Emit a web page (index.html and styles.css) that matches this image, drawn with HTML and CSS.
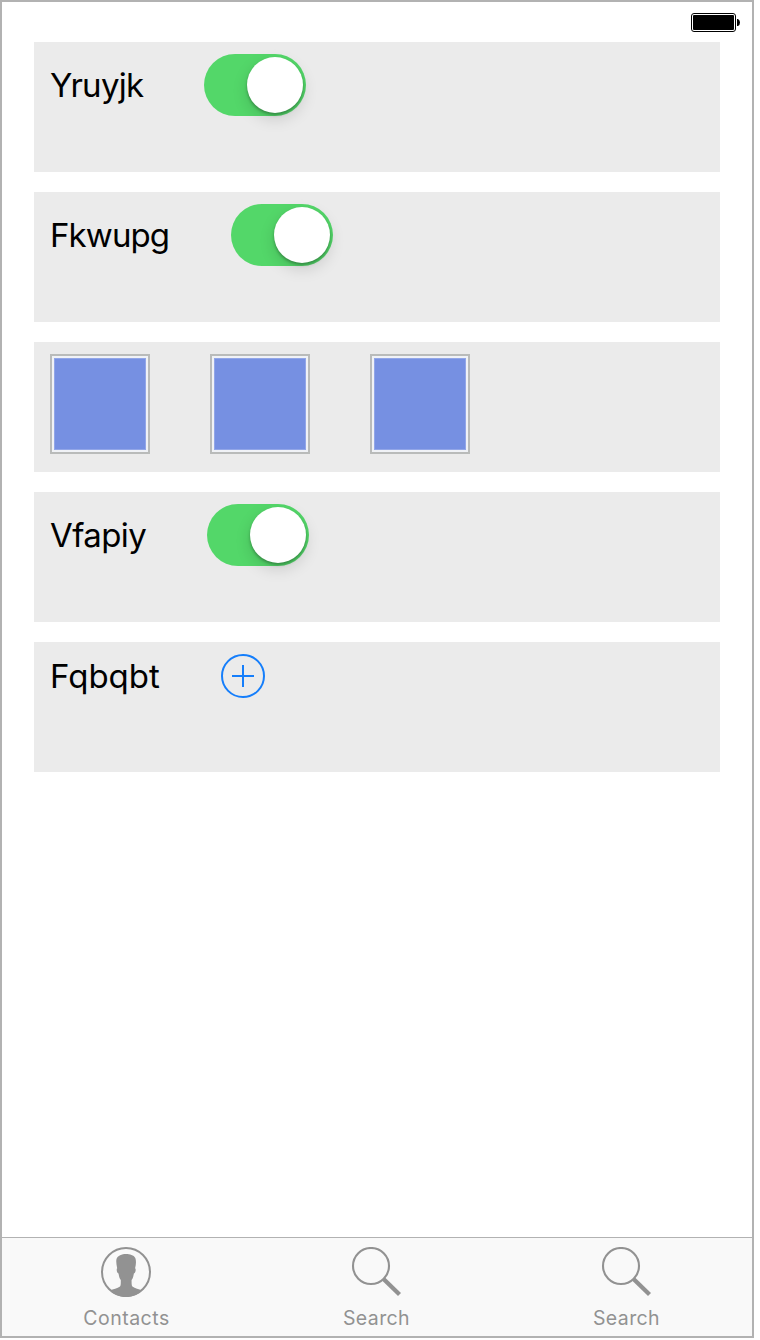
FILE: index.html
```html
<!DOCTYPE html>
<html lang="en">
<head>
<meta charset="utf-8">
<title>Settings</title>
<link rel="stylesheet" href="styles.css">
</head>
<body>
<div class="phone">
  <header class="status-bar">
    <svg class="battery" width="50" height="20" viewBox="0 0 50 20">
      <rect x=".5" y=".5" width="44" height="18" rx="2.5" fill="#fff" stroke="#000"/>
      <rect x="2" y="2" width="41" height="15" rx="1" fill="#000"/>
      <path d="M46 6h1q2 1 2 3.500t-2 3.500h-1z" fill="#000"/>
    </svg>
  </header>
  <main class="panels">
    <section class="panel">
      <span class="label label-first">Yruyjk</span>
      <span class="switch"><span class="knob"></span></span>
    </section>
    <section class="panel">
      <span class="label label-second">Fkwupg</span>
      <span class="switch"><span class="knob"></span></span>
    </section>
    <section class="panel">
      <span class="tile"></span>
      <span class="tile"></span>
      <span class="tile"></span>
    </section>
    <section class="panel">
      <span class="label label-third">Vfapiy</span>
      <span class="switch"><span class="knob"></span></span>
    </section>
    <section class="panel">
      <span class="label label-short label-fourth">Fqbqbt</span>
      <svg class="add" width="44" height="44" viewBox="0 0 44 44" fill="none" stroke="#157efb" stroke-width="2">
        <circle cx="22" cy="22" r="21"/>
        <path d="M11 22h22M22 11v22"/>
      </svg>
    </section>
  </main>
  <nav class="tab-bar">
    <a class="tab">
      <svg class="tab-icon" width="50" height="50" viewBox="0 0 50 50">
        <circle cx="25" cy="25" r="24" fill="none" stroke="#929292" stroke-width="2"/>
        <path d="M9 43.500c3-1.300 7.500-2 10-4 .9-.8.800-3.500.8-6.500-1.300-1.500-1.900-4-2.300-6.500-1.300-.6-1.800-2.300-1.800-3.700 0-.8.200-1.200.5-1.500-.7-3.300-1.300-6.300-.7-9.300 1-3.500 5.500-5 9.500-5 3.800 0 7.800 1 9.300 4 1.200 3.300.6 7-.2 10.300.4.200.6.700.6 1.500 0 1.400-.5 3.100-1.800 3.700-.4 2.500-1 5-2.300 6.500 0 3-.1 5.700.8 6.500 2.500 2 6.600 2.700 9.600 4-4 4-9.500 6.500-16 6.500S13 47.500 9 43.500z" fill="#929292"/>
      </svg>
      <span class="tab-label tab-label-contacts">Contacts</span>
    </a>
    <a class="tab">
      <svg class="tab-icon" width="50" height="50" viewBox="0 0 50 50" fill="none" stroke="#929292">
        <circle cx="20" cy="19" r="18" stroke-width="2.100"/>
        <path d="M32.800 32.300L48.500 47.500" stroke-width="4.300"/>
      </svg>
      <span class="tab-label">Search</span>
    </a>
    <a class="tab">
      <svg class="tab-icon" width="50" height="50" viewBox="0 0 50 50" fill="none" stroke="#929292">
        <circle cx="20" cy="19" r="18" stroke-width="2.100"/>
        <path d="M32.800 32.300L48.500 47.500" stroke-width="4.300"/>
      </svg>
      <span class="tab-label">Search</span>
    </a>
  </nav>
</div>
</body>
</html>
```
FILE: styles.css
```css
* { box-sizing: border-box; }
body {
  margin: 0;
  background: #fff;
  font-family: Inter, "Liberation Sans", sans-serif;
}
.phone {
  width: 754px;
  height: 1338px;
  border: 2px solid #b2b2b2;
  display: flex;
  flex-direction: column;
}
.status-bar {
  height: 40px;
  padding: 11px 11px 0 0;
  display: flex;
  justify-content: flex-end;
}
.battery { display: block; }
.panels {
  flex: 1;
  display: flex;
  flex-direction: column;
  gap: 20px;
  padding: 0 32px;
}
.panel {
  height: 130px;
  padding: 12px 16px;
  background: #ebebeb;
  display: flex;
  align-items: flex-start;
  gap: 60px;
}
.label {
  height: 62px;
  line-height: 63px;
  font-size: 33px;
  white-space: nowrap;
}
.label-first { width: 94px; letter-spacing: -0.7px; }
.label-second { width: 121px; letter-spacing: -0.9px; }
.label-third { width: 97px; letter-spacing: -0.6px; }
.label-fourth { width: 111px; letter-spacing: 0; }
.label-short { height: 44px; line-height: 45px; }
.switch {
  width: 102px;
  height: 62px;
  padding: 3px;
  border-radius: 31px;
  background: #53d769;
  display: flex;
  justify-content: flex-end;
}
.knob {
  width: 56px;
  height: 56px;
  border-radius: 50%;
  background: #fff;
  box-shadow: 0 6px 16px rgba(0, 0, 0, .14), 0 2px 3px rgba(0, 0, 0, .28);
}
.tile {
  width: 100px;
  height: 100px;
  border: 2px solid #b9bbba;
  padding: 2px;
  background: #7690e2 content-box;
  box-shadow: inset 0 0 0 2px #f0f2f6, inset 0 0 0 3px #92a6e8;
}
.add { display: block; }
.tab-bar {
  height: 99px;
  border-top: 1px solid #b2b2b2;
  background: #f9f9f9;
  display: grid;
  grid-template-columns: 248px 252px 248px;
}
.tab {
  padding-top: 9px;
  display: flex;
  flex-direction: column;
  align-items: center;
  gap: 9px;
  color: #929292;
}
.tab-label {
  padding-left: 1px;
  font-size: 19.500px;
  line-height: 24px;
  letter-spacing: 0.4px;
}
.tab-label-contacts { letter-spacing: 0.5px; }
```
